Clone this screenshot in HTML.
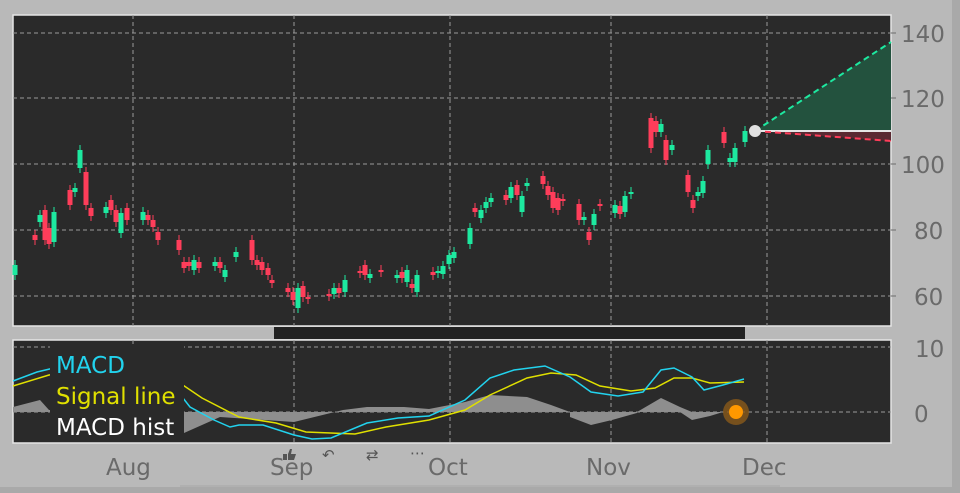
<!DOCTYPE html>
<html><head><style>
html,body{margin:0;padding:0;background:#b9b9b9;width:960px;height:493px;overflow:hidden}
svg{display:block}
text{font-family:"DejaVu Sans","Liberation Sans",sans-serif}
</style></head><body>
<svg id="s" width="960" height="493" xmlns="http://www.w3.org/2000/svg">
<rect x="0" y="0" width="960" height="493" fill="#b9b9b9"/>
<rect x="952" y="0" width="8" height="493" fill="#a9a9a9"/>
<rect x="0" y="487" width="960" height="6" fill="#a9a9a9"/>
<rect x="13" y="15" width="878" height="311" fill="#2a2a2a" stroke="#e6e6e6" stroke-width="1.5"/>
<g stroke="#9a9a9a" stroke-width="1" stroke-dasharray="4,3">
<line x1="13" y1="33" x2="891" y2="33"/><line x1="13" y1="98" x2="891" y2="98"/>
<line x1="13" y1="164" x2="891" y2="164"/><line x1="13" y1="230" x2="891" y2="230"/>
<line x1="13" y1="296" x2="891" y2="296"/>
<line x1="133" y1="15" x2="133" y2="326"/><line x1="294" y1="15" x2="294" y2="326"/>
<line x1="450" y1="15" x2="450" y2="326"/><line x1="611" y1="15" x2="611" y2="326"/>
<line x1="767" y1="15" x2="767" y2="326"/>
</g>
<polygon points="755,131 891,42 891,131" fill="#23523e"/>
<polygon points="755,131 891,131 891,141" fill="#5a2a32"/>
<line x1="755" y1="131" x2="891" y2="131" stroke="#e6e6e6" stroke-width="2"/>
<line x1="755" y1="131" x2="891" y2="42" stroke="#1de9a0" stroke-width="2" stroke-dasharray="6,4"/>
<line x1="755" y1="131" x2="891" y2="141" stroke="#ff3d5a" stroke-width="2" stroke-dasharray="6,4"/>
<g id="c"></g>
<circle cx="755" cy="131" r="6" fill="#e0e0e0"/>
<g fill="#6a6a6a" font-size="23">
<text x="901" y="42">140</text><text x="901" y="107">120</text><text x="901" y="173">100</text>
<text x="914" y="239">80</text><text x="914" y="305">60</text>
</g>
<g stroke="#6a6a6a"><line x1="891" y1="33" x2="896" y2="33"/><line x1="891" y1="98" x2="896" y2="98"/><line x1="891" y1="164" x2="896" y2="164"/><line x1="891" y1="230" x2="896" y2="230"/><line x1="891" y1="296" x2="896" y2="296"/></g>
<rect x="274" y="327" width="471" height="12" fill="#222"/>
<rect x="13" y="340" width="878" height="103" fill="#2a2a2a" stroke="#e6e6e6" stroke-width="1.5"/>
<g stroke="#9a9a9a" stroke-width="1" stroke-dasharray="4,3">
<line x1="13" y1="347" x2="891" y2="347"/><line x1="13" y1="412" x2="891" y2="412"/>
<line x1="133" y1="340" x2="133" y2="443"/><line x1="294" y1="340" x2="294" y2="443"/>
<line x1="450" y1="340" x2="450" y2="443"/><line x1="611" y1="340" x2="611" y2="443"/>
<line x1="767" y1="340" x2="767" y2="443"/>
</g>
<polygon fill="#8e8e8e" points="13,412 13,407 40,400 49,410 184,412 184,433 220,417 294,422 343,410 367,407 404,407 429,409 465,402 490,395 527,397 551,405 570,412 591,412 612,412 637,412 661,398 680,407 692,412 723,412"/>
<polygon fill="#8e8e8e" points="570,412 570,417 591,425 612,420 637,413 637,412"/>
<polygon fill="#8e8e8e" points="680,412 692,420 710,416 723,412"/>
<polyline fill="none" stroke="#e0e000" stroke-width="1.5" points="13,386 49,375 141,363 171,377 202,398 239,417 276,423 306,432 355,434 386,427 429,420 465,410 490,395 527,378 551,373 576,375 600,386 631,391 655,388 674,378 692,378 710,383 744,382"/>
<polyline fill="none" stroke="#22d3ee" stroke-width="1.5" points="13,381 37,372 58,367 135,363 165,375 190,407 214,420 230,427 239,425 263,425 294,435 312,439 331,438 367,423 398,418 429,416 465,400 490,378 514,370 545,366 570,377 591,392 618,396 643,392 661,370 674,368 692,377 704,390 723,385 744,379"/>
<rect x="50" y="345" width="134" height="97" fill="#2a2a2a"/>
<text x="56" y="373" font-size="23" fill="#22d3ee">MACD</text>
<text x="56" y="404" font-size="23" fill="#e0e000">Signal line</text>
<text x="56" y="435" font-size="23" fill="#ffffff">MACD hist</text>
<circle cx="736" cy="412" r="13" fill="#8a5a1a" opacity="0.8"/>
<circle cx="736" cy="412" r="7" fill="#ff9800"/>
<g fill="#6a6a6a" font-size="23">
<text x="915" y="357">10</text><text x="914" y="422">0</text>
<text x="106" y="475">Aug</text><text x="270" y="475">Sep</text><text x="428" y="475">Oct</text>
<text x="586" y="475">Nov</text><text x="742" y="475">Dec</text>
</g>
<path d="M283 460 h4 v-6 h-4 z M288 460 h6 l2 -6 h-5 l1 -5 h-2 l-2 5 z" fill="#555"/>
<g fill="#555" font-size="15"><text x="322" y="460">↶</text><text x="366" y="460">⇄</text><text x="410" y="458">⋯</text></g>
<line x1="180" y1="486" x2="780" y2="486" stroke="#a8a8a8"/>
</svg>
<script>
var d=[[15,265,275,0],[35,235,240,1],[40,215,222,0],[45,210,240,1],[49,228,244,1],[54,212,242,0],[70,190,205,1],[75,188,192,0],[80,150,168,0],[86,172,205,1],[91,208,216,1],[106,207,213,0],[111,200,210,1],[116,210,222,1],[121,213,233,0],[127,208,220,1],[143,212,220,0],[148,215,220,1],[153,220,227,1],[158,232,240,1],[179,240,250,1],[184,262,268,1],[189,262,266,1],[194,260,270,0],[199,262,268,1],[215,262,266,0],[220,262,268,1],[225,270,277,0],[236,252,257,0],[252,240,260,1],[257,260,265,1],[262,262,270,1],[268,268,275,1],[272,280,283,1],[288,288,292,1],[293,292,300,1],[298,288,308,0],[303,286,297,1],[308,297,299,1],[329,294,296,1],[334,288,294,0],[339,288,293,1],[345,280,292,0],[360,271,273,1],[365,265,275,1],[370,274,278,0],[381,270,272,1],[397,275,278,0],[402,272,278,1],[407,270,282,0],[412,284,288,1],[417,275,292,0],[433,272,275,1],[438,271,273,0],[443,266,274,0],[449,255,264,0],[454,252,258,0],[470,228,244,0],[475,208,212,1],[481,210,218,0],[486,202,208,0],[491,198,202,0],[506,195,200,1],[511,187,198,0],[517,185,195,1],[522,196,212,0],[527,183,186,0],[543,176,184,1],[548,186,195,1],[553,192,208,1],[558,198,210,1],[563,199,201,1],[579,204,220,1],[584,217,220,0],[589,232,240,1],[594,214,225,0],[600,204,206,1],[615,205,213,0],[620,206,214,1],[625,196,212,0],[631,192,194,0],[651,118,148,1],[656,121,132,1],[661,124,132,0],[666,140,160,1],[672,145,150,0],[688,175,192,1],[693,200,208,1],[698,192,196,0],[703,181,193,0],[708,150,164,0],[724,132,143,1],[730,158,162,0],[735,148,162,0],[745,131,142,0]];
var g=document.getElementById('c'),s='';
d.forEach(function(a){var c=a[3]?'#ff3d5a':'#1de9a0';s+='<line x1="'+a[0]+'" x2="'+a[0]+'" y1="'+(a[1]-5)+'" y2="'+(a[2]+5)+'" stroke="'+c+'" stroke-width="1"/><rect x="'+(a[0]-2.5)+'" y="'+a[1]+'" width="5" height="'+Math.max(2,a[2]-a[1])+'" fill="'+c+'"/>';});
g.innerHTML=s;
</script>
</body></html>
